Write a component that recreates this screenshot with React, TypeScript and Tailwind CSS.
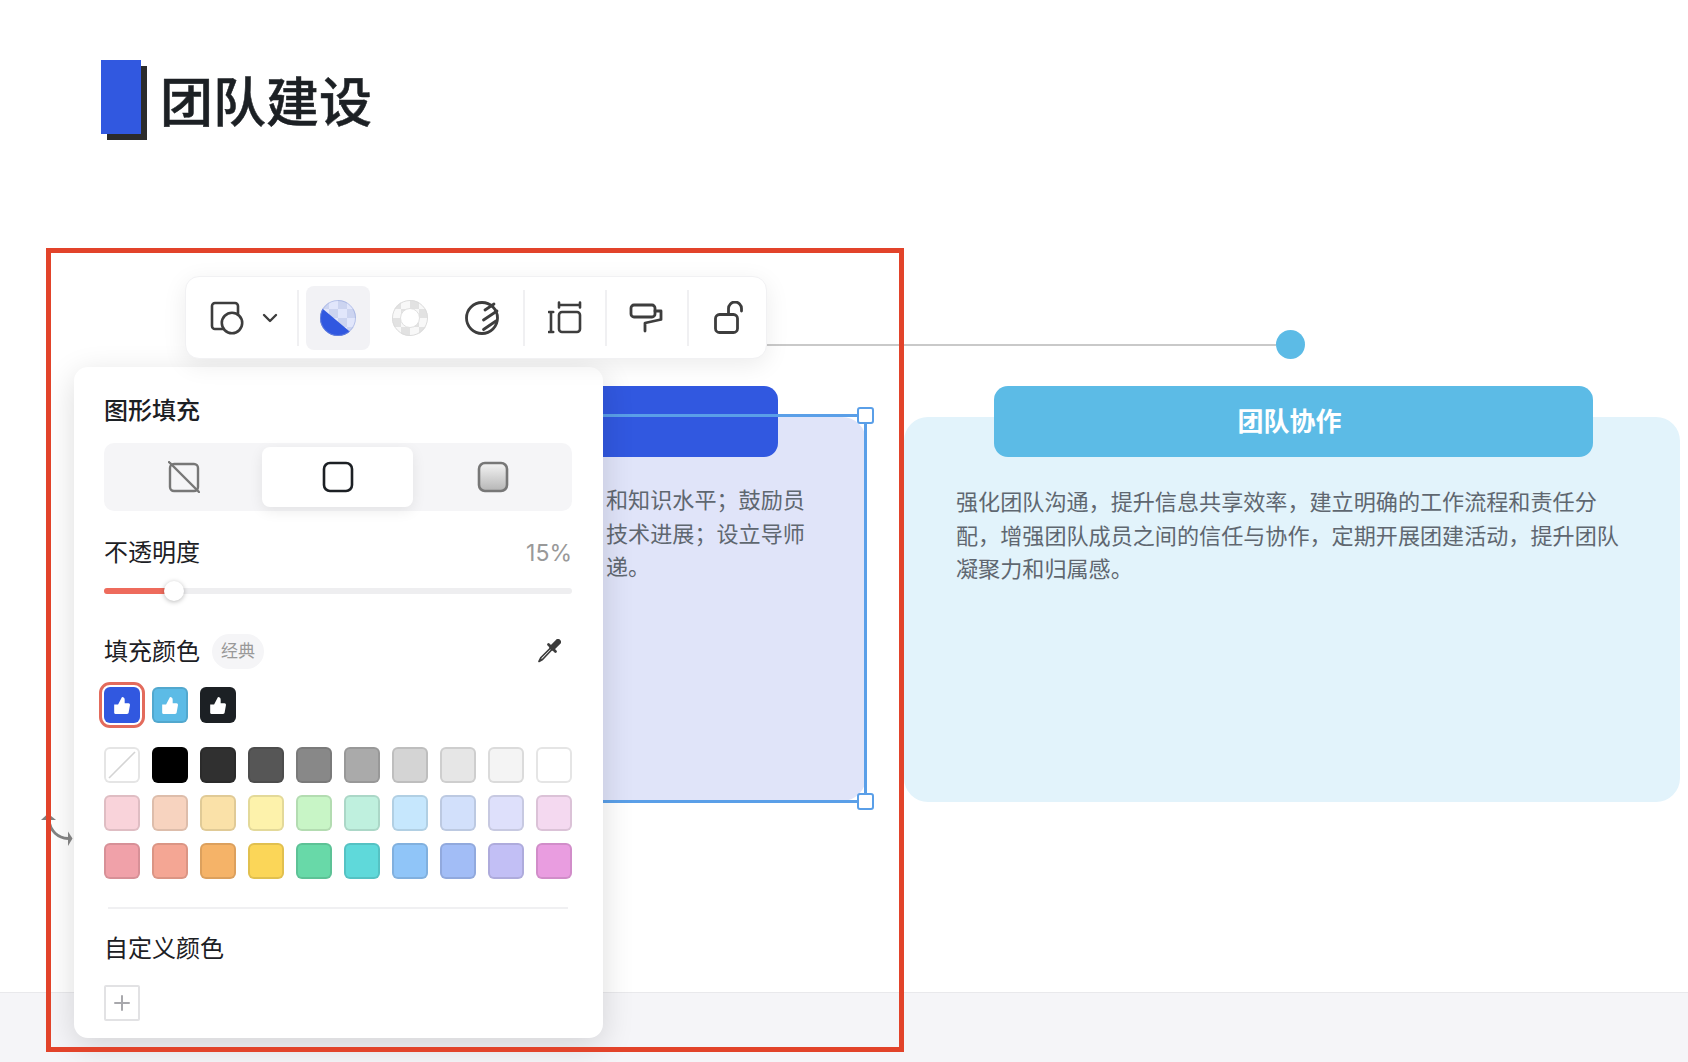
import React from "react";

const rowOne = ["#000000", "#303030", "#565656", "#888888", "#aaaaaa", "#d4d4d4", "#e6e6e6", "#f4f4f4", "#ffffff"];
const rowTwo = ["#f9d3da", "#f7d3bf", "#fae1a8", "#fdf2ab", "#c8f5c6", "#bff0de", "#c6e7fd", "#d2e0fb", "#dee0fb", "#f4d9f0"];
const rowThree = ["#f0a1a9", "#f4a694", "#f5b368", "#fbd658", "#68d9a8", "#5fd9da", "#90c5f8", "#a2bdf6", "#c2bff5", "#e99de0"];

const collabBody =
  "强化团队沟通\uFF0C提升信息共享效率\uFF0C建立明确的工作流程和责任分配\uFF0C增强团队成员之间的信任与协作\uFF0C定期开展团建活动\uFF0C提升团队凝聚力和归属感。";
const leftLineOne = "和知识水平\uFF1B鼓励员";
const leftLineTwo = "技术进展\uFF1B设立导师";

const Swatch = ({ color }: { color: string }) => (
  <div
    className="h-9 w-9 rounded-[6px] border-2 border-black/10 bg-clip-border"
    style={{ backgroundColor: color }}
  />
);

const Thumb = () => (
  <svg width="18" height="19" viewBox="0 0 16 17" fill="#ffffff">
    <path d="M1 7.500h3.500L8 1c1.600 0 2.400 1 2.400 2.300V6.500h3.400c.9 0 1.500.8 1.300 1.700l-1.200 6.800c-.1.600-.7 1-1.300 1H2c-.6 0-1-.4-1-1z" />
  </svg>
);

const Checker = ({ dark, light, size }: { dark: string; light: string; size: number }) => {
  const cells: React.ReactNode[] = [];
  for (let r = 0; r < 5; r++) {
    for (let c = 0; c < 5; c++) {
      if ((r + c) % 2 === 0) {
        cells.push(<rect key={`${r}-${c}`} x={c * size} y={r * size} width={size} height={size} fill={dark} />);
      }
    }
  }
  return (
    <>
      <rect width="36" height="36" fill={light} />
      {cells}
    </>
  );
};

const ShapeIcon = () => (
  <svg width="34" height="34" viewBox="0 0 34 34" fill="none" stroke="#3d3d3d" strokeWidth="2.600">
    <rect x="2" y="2" width="26" height="26" rx="3" />
    <circle cx="22" cy="22" r="10.200" fill="#ffffff" />
  </svg>
);

const FillIcon = () => (
  <svg width="36" height="36" viewBox="0 0 36 36">
    <defs>
      <clipPath id="fillClip">
        <circle cx="18" cy="18" r="18" />
      </clipPath>
    </defs>
    <g clipPath="url(#fillClip)">
      <Checker dark="#ccd4f0" light="#e1e6fb" size={9} />
      <polygon points="-4,3 35,36 -4,36" fill="#3158e0" />
    </g>
    <circle cx="18" cy="18" r="17.500" fill="none" stroke="#8e9fd8" strokeWidth="1" strokeOpacity="0.5" />
  </svg>
);

const StrokeIcon = () => (
  <svg width="36" height="36" viewBox="0 0 36 36">
    <defs>
      <clipPath id="strokeClip">
        <circle cx="18" cy="18" r="18" />
      </clipPath>
    </defs>
    <g clipPath="url(#strokeClip)">
      <Checker dark="#e2e2e2" light="#f8f8f8" size={9} />
    </g>
    <circle cx="18" cy="18" r="9.500" fill="#ffffff" stroke="#e0e0e0" strokeWidth="1" />
    <circle cx="18" cy="18" r="17.500" fill="none" stroke="#dcdcdc" strokeWidth="1" />
  </svg>
);

const ShadowIcon = () => (
  <svg width="36" height="36" viewBox="0 0 36 36" fill="none" stroke="#3d3d3d" strokeWidth="2.800" strokeLinecap="round">
    <circle cx="18" cy="18" r="15.500" />
    <path d="M21 10 30 4M19.500 20 33 11M19.500 29.500 32 21" />
  </svg>
);

const SpacingIcon = () => (
  <svg width="34" height="34" viewBox="0 0 34 34" fill="none" stroke="#3d3d3d" strokeWidth="2.600" strokeLinecap="round">
    <path d="M11 4H32M11 1.500V6.500M32 1.500V6.500" />
    <path d="M3 11V31M.8 11H5.200M.8 31H5.200" />
    <rect x="11" y="11" width="21" height="20" rx="3" />
  </svg>
);

const PaintIcon = () => (
  <svg width="34" height="32" viewBox="0 0 34 32" fill="none" stroke="#3d3d3d" strokeWidth="2.800" strokeLinecap="round" strokeLinejoin="round">
    <rect x="2" y="3" width="24" height="12" rx="3" />
    <path d="M26 9H32V17.500L16 21V29" />
  </svg>
);

const LockIcon = () => (
  <svg width="34" height="34" viewBox="0 0 34 34" fill="none" stroke="#3d3d3d" strokeWidth="2.800" strokeLinecap="round">
    <rect x="3.500" y="13.500" width="22" height="18" rx="4" />
    <path d="M16.500 13V7.500a6.500 6.500 0 0 1 13 0V10" />
  </svg>
);

const Divider = () => <div className="h-[56px] w-[2px] shrink-0 bg-[#f0f0f2]" />;

const Toolbar = () => (
  <div className="absolute left-[185px] top-[276px] z-20 flex h-[83px] w-[582px] items-center rounded-[14px] border border-[#f1f1f3] bg-white shadow-[0_6px_24px_rgba(0,0,0,0.08)]">
    <div className="flex w-[111px] shrink-0 items-center pl-[24px]">
      <ShapeIcon />
      <svg className="ml-[18px]" width="16" height="10" viewBox="0 0 16 10" fill="none" stroke="#3d3d3d" strokeWidth="2.400" strokeLinecap="round" strokeLinejoin="round">
        <path d="M2 2 8 8 14 2" />
      </svg>
    </div>
    <Divider />
    <div className="flex w-[224px] shrink-0 items-center gap-2 pl-[7px]">
      <div className="flex h-16 w-16 items-center justify-center rounded-[8px] bg-[#f2f2f5]">
        <FillIcon />
      </div>
      <div className="flex h-16 w-16 items-center justify-center">
        <StrokeIcon />
      </div>
      <div className="flex h-16 w-16 items-center justify-center">
        <ShadowIcon />
      </div>
    </div>
    <Divider />
    <div className="flex w-[80px] shrink-0 items-center justify-center">
      <SpacingIcon />
    </div>
    <Divider />
    <div className="flex w-[80px] shrink-0 items-center justify-center pr-[2px]">
      <PaintIcon />
    </div>
    <Divider />
    <div className="flex flex-1 items-center justify-center pl-[3px]">
      <LockIcon />
    </div>
  </div>
);

const FillPanel = () => (
  <div className="absolute left-[74px] top-[367px] z-10 flex w-[529px] flex-col rounded-[14px] bg-white pb-[17px] pl-[30px] pr-[31px] pt-[28px] text-[24px] text-[#1c2024] shadow-[0_8px_32px_rgba(0,0,0,0.14)]">
    <div className="h-8 font-medium leading-8">图形填充</div>

    <div className="mt-4 grid h-[68px] grid-cols-[154px_151px_1fr] rounded-[10px] bg-[#f5f5f7] p-1">
      <div className="flex items-center justify-center pr-[2px]">
        <svg width="32" height="32" viewBox="0 0 32 32" fill="none" stroke="#777777" strokeWidth="2.400" strokeLinecap="round">
          <rect x="2" y="3" width="28" height="27" rx="4" />
          <path d="M1 1 31 31" />
        </svg>
      </div>
      <div className="flex items-center justify-center rounded-[8px] bg-white shadow-[0_4px_14px_rgba(0,0,0,0.08)]">
        <svg width="32" height="32" viewBox="0 0 32 32" fill="none" stroke="#1c2024" strokeWidth="2.600">
          <rect x="2" y="2" width="28" height="28" rx="6" />
        </svg>
      </div>
      <div className="flex items-center justify-center pl-[4px]">
        <svg width="32" height="32" viewBox="0 0 32 32">
          <defs>
            <linearGradient id="segFill" x1="0" y1="0" x2="0" y2="1">
              <stop offset="0" stopColor="#f4f4f4" />
              <stop offset="1" stopColor="#b5b5b5" />
            </linearGradient>
          </defs>
          <rect x="2" y="2" width="28" height="28" rx="6" fill="url(#segFill)" stroke="#777777" strokeWidth="2.600" />
        </svg>
      </div>
    </div>

    <div className="mt-[26px] flex h-8 items-center justify-between leading-8">
      <span>不透明度</span>
      <span className="text-[23px] text-[#999999]">15%</span>
    </div>

    <div className="relative mt-[12px] flex h-5 items-center">
      <div className="h-[6px] w-full rounded-full bg-[#eeeef0]">
        <div className="h-full w-[70px] rounded-full bg-[#ee6b5c]" />
      </div>
      <div className="absolute left-[60px] top-0 h-5 w-5 rounded-full bg-white shadow-[0_1px_5px_rgba(0,0,0,0.28)]" />
    </div>

    <div className="mt-8 flex h-[35px] items-center">
      <span className="translate-y-px">填充颜色</span>
      <span className="ml-[12px] flex h-[35px] w-[52px] translate-y-px items-center justify-center rounded-full bg-[#f5f5f7] text-[17px] text-[#999999]">
        经典
      </span>
      <svg className="ml-auto mr-[11px]" width="24" height="24" viewBox="0 0 24 24" fill="none" stroke="#3d3d3d" strokeLinecap="round">
        <path d="M15.500 8.500 21 3" strokeWidth="6" />
        <path d="M11.500 5.500 18.500 12.500" strokeWidth="2.800" />
        <path d="M13 9.500 4 18.500 2 22.500 5.500 20.500 14.500 11" strokeWidth="1.700" strokeLinejoin="round" />
      </svg>
    </div>

    <div className="mt-[19px] flex gap-3">
      <div className="flex h-9 w-9 items-center justify-center rounded-[6px] bg-[#3158e0] outline-[3px] outline-offset-[2px] outline-[#e36b5c]">
        <Thumb />
      </div>
      <div className="flex h-9 w-9 items-center justify-center rounded-[6px] border-2 border-black/10 bg-[#5cbbe6]">
        <Thumb />
      </div>
      <div className="flex h-9 w-9 items-center justify-center rounded-[6px] bg-[#1c2024]">
        <Thumb />
      </div>
    </div>

    <div className="mt-6 grid grid-cols-10 gap-3">
      <div className="h-9 w-9 rounded-[6px] border-2 border-black/10 bg-white">
        <svg width="32" height="32" viewBox="0 0 32 32" stroke="#d4d4d4" strokeWidth="1.600">
          <path d="M3 29 29 3" />
        </svg>
      </div>
      {rowOne.map((c) => (
        <Swatch key={c} color={c} />
      ))}
      {rowTwo.map((c) => (
        <Swatch key={c} color={c} />
      ))}
      {rowThree.map((c) => (
        <Swatch key={c} color={c} />
      ))}
    </div>

    <div className="mx-1 mt-[28px] h-[2px] bg-[#f0f0f2]" />

    <div className="mt-[24px] h-8 leading-8">自定义颜色</div>

    <div className="mt-5 flex h-9 w-9 items-center justify-center rounded-[2px] border-2 border-[#e2e2e4]">
      <svg width="18" height="18" viewBox="0 0 18 18" stroke="#a8a8ac" strokeWidth="2" strokeLinecap="round">
        <path d="M9 2V16M2 9H16" />
      </svg>
    </div>
  </div>
);

const Handle = ({ pos }: { pos: string }) => (
  <div className={`absolute -right-[10px] h-[17px] w-[17px] rounded-[3px] border-2 border-[#5a9fe8] bg-white ${pos}`} />
);

export default function App() {
  return (
    <div className="relative flex h-[1062px] w-[1688px] flex-col overflow-hidden bg-white font-['Inter','Noto_Sans_CJK_SC',sans-serif]">
      <div className="flex h-[992px] shrink-0 flex-col">
        {/* title */}
        <div className="ml-[101px] mt-[60px] flex items-start">
          <div className="h-[74px] w-10 bg-[#3158e0] shadow-[6px_6px_0_#2b2b2b]" />
          <h1 className="ml-[19px] h-[74px] text-[53px] font-medium leading-[86px] text-[#1c2024] [-webkit-text-stroke:0.5px_#1c2024]">团队建设</h1>
        </div>

        {/* timeline */}
        <div className="ml-[700px] mt-[196px] flex h-[29px] items-center">
          <div className="h-[2px] w-[576px] bg-[#c9c9c9]" />
          <div className="h-[29px] w-[29px] rounded-full bg-[#5cbbe6]" />
        </div>

        {/* cards */}
        <div className="ml-[90px] mt-[27px] flex gap-[38px]">
          <div className="relative mt-[31px] h-[384px] w-[776px] rounded-[24px] bg-[#e0e4f9]">
            <div className="mx-auto -mt-[31px] h-[71px] w-[600px] rounded-[14px] bg-[#3158e0]" />
            <div className="ml-[516px] mt-[27px] text-[22.1px] leading-[33.5px] text-[#5f6770]">
              <div>{leftLineOne}</div>
              <div>{leftLineTwo}</div>
              <div>递。</div>
            </div>
            <div className="absolute -bottom-[2px] -left-[14px] -right-[1px] -top-[3px] border-[3px] border-[#5a9fe8]">
              <Handle pos="-top-[10px]" />
              <Handle pos="-bottom-[10px]" />
            </div>
          </div>

          <div className="mt-[31px] h-[385px] w-[776px] rounded-[24px] bg-[#e2f3fb]">
            <div className="-mt-[31px] ml-[90px] flex h-[71px] w-[599px] items-center justify-center rounded-[14px] bg-[#5cbbe6] pr-[8px] text-[26px] font-bold text-white">
              团队协作
            </div>
            <div className="mt-[29px] px-[52px] text-[22.1px] leading-[33.5px] text-[#5f6770]">
              {collabBody}
            </div>
          </div>
        </div>
      </div>

      <div className="flex-1 border-t border-[#e9e9ec] bg-[#f5f5f8]" />

      <Toolbar />
      <FillPanel />

      {/* red annotation frame */}
      <div className="pointer-events-none absolute left-[46px] top-[248px] z-30 h-[804px] w-[858px] border-[5px] border-[#e2432a]" />

      {/* rotate handle, partly under the frame */}
      <svg className="absolute left-[35px] top-[805px] z-[25]" width="50" height="50" viewBox="0 0 50 50" fill="none">
        <path d="M6 15 13 8.500 21 15z" fill="#808080" />
        <path d="M14 15C15 26 23 33 33 33.500" stroke="#808080" strokeWidth="2.800" />
        <path d="M33 26.500 37.500 33.500 33 41z" fill="#808080" />
      </svg>
    </div>
  );
}
